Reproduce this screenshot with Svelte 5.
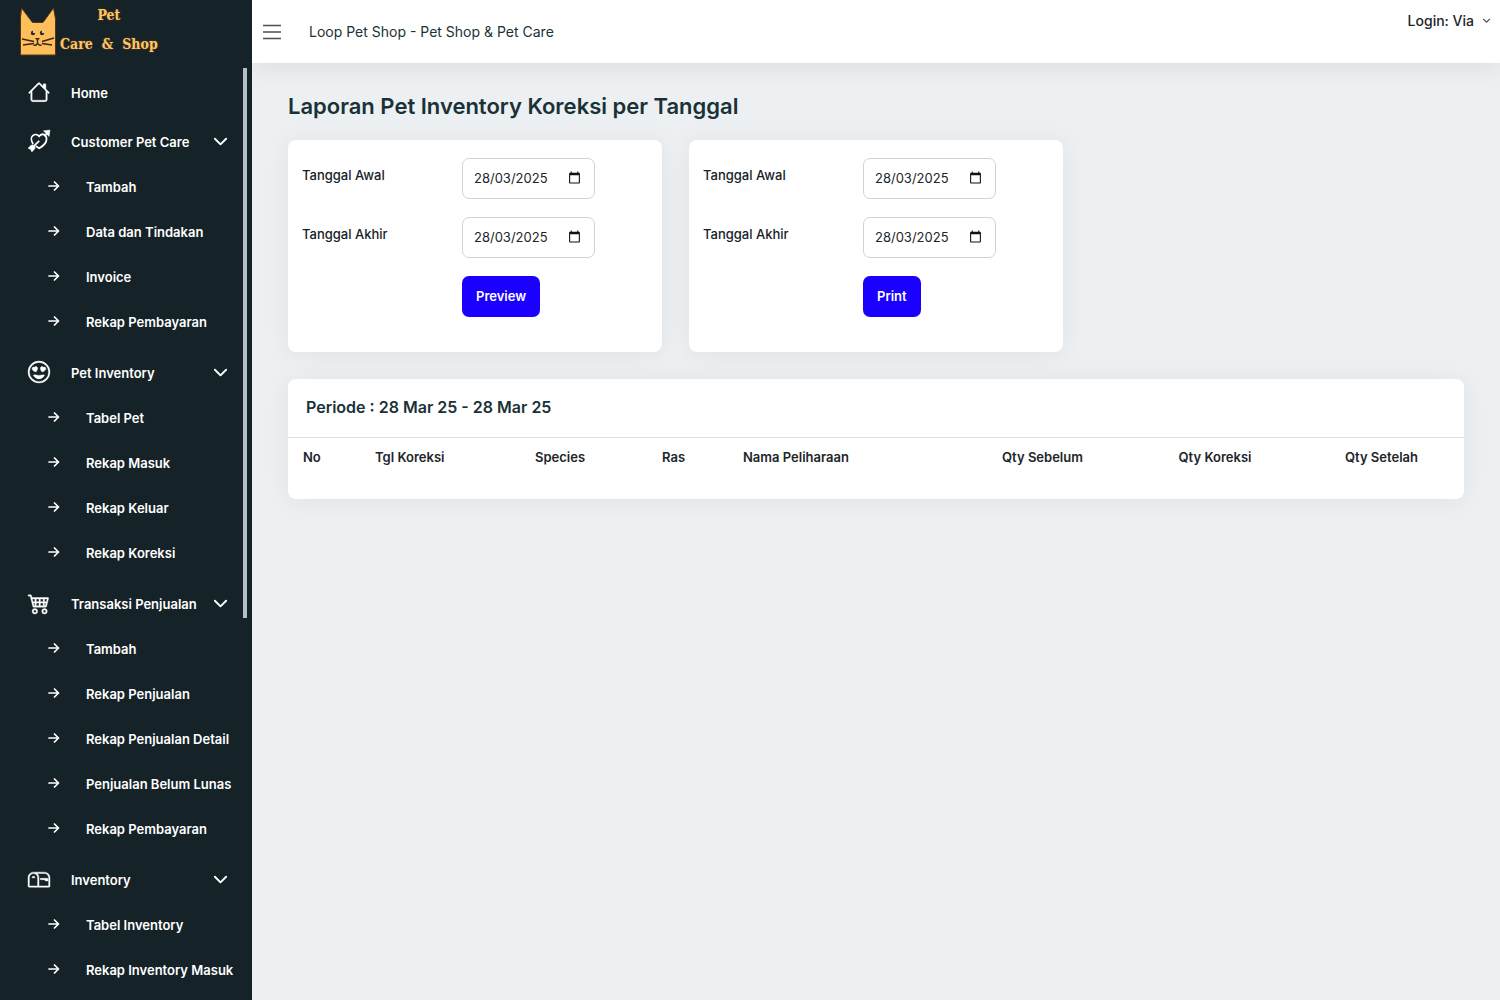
<script lang="ts">
	interface MenuGroup {
		label: string;
		icon: 'home' | 'heart' | 'smile' | 'cart' | 'mailbox';
		items: string[];
	}

	const menu: MenuGroup[] = [
		{ label: 'Home', icon: 'home', items: [] },
		{
			label: 'Customer Pet Care',
			icon: 'heart',
			items: ['Tambah', 'Data dan Tindakan', 'Invoice', 'Rekap Pembayaran'],
		},
		{
			label: 'Pet Inventory',
			icon: 'smile',
			items: ['Tabel Pet', 'Rekap Masuk', 'Rekap Keluar', 'Rekap Koreksi'],
		},
		{
			label: 'Transaksi Penjualan',
			icon: 'cart',
			items: [
				'Tambah',
				'Rekap Penjualan',
				'Rekap Penjualan Detail',
				'Penjualan Belum Lunas',
				'Rekap Pembayaran',
			],
		},
		{
			label: 'Inventory',
			icon: 'mailbox',
			items: ['Tabel Inventory', 'Rekap Inventory Masuk'],
		},
	];

	const forms = $state([
		{ id: 'preview', action: 'Preview', awal: '28/03/2025', akhir: '28/03/2025' },
		{ id: 'print', action: 'Print', awal: '28/03/2025', akhir: '28/03/2025' },
	]);

	// widths are relative, the table spreads them over its full width
	const columns = [
		{ label: 'No', width: 72 },
		{ label: 'Tgl Koreksi', width: 160 },
		{ label: 'Species', width: 127 },
		{ label: 'Ras', width: 81 },
		{ label: 'Nama Peliharaan', width: 226 },
		{ label: 'Qty Sebelum', width: 177, center: true },
		{ label: 'Qty Koreksi', width: 168, center: true },
		{ label: 'Qty Setelah', width: 165, center: true },
	];

	let closed = $state<string[]>([]);

	function toggleGroup(label: string) {
		closed = closed.includes(label) ? closed.filter((l) => l !== label) : [...closed, label];
	}
</script>

{#snippet menuIcon(name: string)}
	<svg class="menu-icon" viewBox="0 0 16 16" aria-hidden="true">
		{#if name === 'home'}
			<path
				d="M8.707 1.5a1 1 0 0 0-1.414 0L.646 8.146a.5.5 0 0 0 .708.708L2 8.207V13.5A1.5 1.5 0 0 0 3.5 15h9a1.5 1.5 0 0 0 1.5-1.5V8.207l.646.647a.5.5 0 0 0 .708-.708L13 5.793V2.5a.5.5 0 0 0-.5-.5h-1a.5.5 0 0 0-.5.5v1.293zM13 7.207V13.5a.5.5 0 0 1-.5.5h-9a.5.5 0 0 1-.5-.5V7.207l5-5z"
			/>
		{:else if name === 'heart'}
			<path
				class="line"
				d="M3.5 9.800C2 7.500 2.200 5 3.700 3.900c1.500-1.100 3.400-.6 4.400.7 1-1.400 2.700-1.800 4-1 1.800 1.200 1.900 4 .2 6.300-1 1.300-2.400 2.400-4.100 3.400-.8-.5-1.500-.9-2.100-1.400M7.800 8.200 3.500 12.500"
			/>
			<path d="M11.200.6 16 0l-.6 4.800-1.600-1.500-1.400 1.400-.8-.8L13 2.500z" />
			<path d="M3.600 10.800 5.300 12.500 4.900 13.800 2.800 16l-.9-1.900L0 13.200l2.200-2.100z" />
		{:else if name === 'smile'}
			<path d="M8 15A7 7 0 1 1 8 1a7 7 0 0 1 0 14m0 1A8 8 0 1 0 8 0a8 8 0 0 0 0 16" />
			<path
				d="M11.315 10.014a.5.5 0 0 1 .548.736A4.500 4.500 0 0 1 7.965 13a4.500 4.500 0 0 1-3.898-2.250.5.5 0 0 1 .548-.736h.005l.017.005.067.015.252.055c.215.046.515.108.857.169.693.124 1.522.242 2.152.242s1.460-.118 2.152-.242a27 27 0 0 0 1.109-.224l.067-.015.017-.004.005-.002zM4.756 4.566c.763-1.424 4.020-.12.952 3.434-4.496-1.596-2.350-4.298-.952-3.434m6.488 0c1.398-.864 3.544 1.838-.952 3.434-3.067-3.554.19-4.858.952-3.434"
			/>
		{:else if name === 'cart'}
			<path
				d="M0 2.500A.5.5 0 0 1 .5 2H2a.5.5 0 0 1 .485.379L2.890 4H14.500a.5.5 0 0 1 .485.621l-1.500 6A.5.5 0 0 1 13 11H4a.5.5 0 0 1-.485-.379L1.610 3H.5a.5.5 0 0 1-.5-.5M3.140 5l.5 2H5V5zM6 5v2h2V5zm3 0v2h2V5zm3 0v2h1.360l.5-2zm1.110 3H12v2h.610zM11 8H9v2h2zM8 8H6v2h2zM5 8H3.890l.5 2H5zm0 5a1 1 0 1 0 0 2 1 1 0 0 0 0-2m-2 1a2 2 0 1 1 4 0 2 2 0 0 1-4 0m9-1a1 1 0 1 0 0 2 1 1 0 0 0 0-2m-2 1a2 2 0 1 1 4 0 2 2 0 0 1-4 0"
			/>
		{:else}
			<path
				d="M4 4a3 3 0 0 0-3 3v6h6V7a3 3 0 0 0-3-3m0-1h8a4 4 0 0 1 4 4v6a1 1 0 0 1-1 1H1a1 1 0 0 1-1-1V7a4 4 0 0 1 4-4m2.646 1A4 4 0 0 1 8 7v6h7V7a3 3 0 0 0-3-3z"
			/>
			<path
				d="M11.793 8.500H9v-1h5a.5.5 0 0 1 .5.5v1a.5.5 0 0 1-.5.5h-1a.5.5 0 0 1-.354-.146zM5 7c0 .552-.448 0-1 0s-1 .552-1 0a1 1 0 0 1 2 0"
			/>
		{/if}
	</svg>
{/snippet}

{#snippet dateField(id: string, label: string, value: string, onChange: (v: string) => void)}
	<div class="field">
		<label for={id}>{label}</label>
		<div class="date-box">
			<input
				{id}
				type="text"
				inputmode="numeric"
				{value}
				oninput={(event) => onChange(event.currentTarget.value)}
			/>
			<svg class="calendar" viewBox="0 0 24 24" aria-hidden="true">
				<path
					d="M20 3h-1V1h-2v2H7V1H5v2H4c-1.100 0-2 .9-2 2v16c0 1.100.9 2 2 2h16c1.100 0 2-.9 2-2V5c0-1.100-.9-2-2-2zm0 18H4V8h16v13z"
				/>
			</svg>
		</div>
	</div>
{/snippet}

<div class="layout">
	<aside class="sidebar">
		<a class="brand" href="#home" aria-label="Pet Care & Shop">
			<svg class="cat" viewBox="0 0 38 50" aria-hidden="true">
				<path
					d="M1.500 49V12L2.500 2l11 14.500h10.500L34.500 2l2 11v36z"
					fill="#fdbe5c"
					stroke="#5a3410"
					stroke-width="1"
				/>
				<circle cx="14" cy="27" r="2.200" fill="#3a2616" />
				<circle cx="23" cy="27" r="2.200" fill="#3a2616" />
				<circle cx="15" cy="26" r="1" fill="#fff" />
				<circle cx="24" cy="26" r="1" fill="#fff" />
				<path d="M16 32h5l-2.500 3z" fill="#3a2616" />
				<path
					d="M18.500 34v3m-4 2q3 1 4-2 1 3 4 2M15 35.500 3 33m12 4.500L4 39m19-3.500L35 32m-12 5.500 10 1.500"
					fill="none"
					stroke="#3a2616"
					stroke-width="1.400"
				/>
			</svg>
			<span class="brand-text">
				<span>Pet</span>
				<span class="brand-line"><span>Care</span><span>&amp;</span><span>Shop</span></span>
			</span>
		</a>

		<div class="menu-wrap">
			<nav class="menu">
				{#each menu as group (group.label)}
					{#if group.items.length === 0}
						<a class="menu-head" href="#home">
							{@render menuIcon(group.icon)}
							<span>{group.label}</span>
						</a>
					{:else}
						<div class="menu-group">
							<button
								type="button"
								class="menu-head"
								aria-expanded={!closed.includes(group.label)}
								onclick={() => toggleGroup(group.label)}
							>
								{@render menuIcon(group.icon)}
								<span>{group.label}</span>
								<svg class="chevron" viewBox="0 0 16 16" aria-hidden="true">
									<path d="m2 4 6 6 6-6" />
								</svg>
							</button>
							{#if !closed.includes(group.label)}
								<ul class="submenu">
									{#each group.items as item (item)}
										<li>
											<a href="#menu">
												<svg class="arrow" viewBox="0 0 12 12" aria-hidden="true">
													<path d="M1 5h9.500M6.500 1l4 4-4 4" />
												</svg>
												<span>{item}</span>
											</a>
										</li>
									{/each}
								</ul>
							{/if}
						</div>
					{/if}
				{/each}
			</nav>
			<div class="scroll-thumb"></div>
		</div>
	</aside>

	<div class="page">
		<header class="topbar">
			<button type="button" class="burger" aria-label="Menu">
				<svg viewBox="0 0 18 16" aria-hidden="true">
					<path d="M0 1.500h18M0 8h18M0 14.500h18" />
				</svg>
			</button>
			<span class="shop-name">Loop Pet Shop - Pet Shop &amp; Pet Care</span>
			<button type="button" class="login">
				Login: Via
				<svg viewBox="0 0 16 16" aria-hidden="true"><path d="m2 5 6 6 6-6" /></svg>
			</button>
		</header>

		<main class="content">
			<h1>Laporan Pet Inventory Koreksi per Tanggal</h1>

			<div class="form-grid">
				{#each forms as form (form.id)}
					<form class="card filter" onsubmit={(event) => event.preventDefault()}>
						{@render dateField(`${form.id}-awal`, 'Tanggal Awal', form.awal, (v) => (form.awal = v))}
						{@render dateField(
							`${form.id}-akhir`,
							'Tanggal Akhir',
							form.akhir,
							(v) => (form.akhir = v),
						)}
						<div class="field">
							<span></span>
							<button type="submit" class="submit">{form.action}</button>
						</div>
					</form>
				{/each}
			</div>

			<section class="card report">
				<h2>Periode : 28 Mar 25 - 28 Mar 25</h2>
				<table>
					<colgroup>
						{#each columns as column (column.label)}
							<col style="width: {column.width}px" />
						{/each}
					</colgroup>
					<thead>
						<tr>
							{#each columns as column (column.label)}
								<th class:center={column.center}>{column.label}</th>
							{/each}
						</tr>
					</thead>
				</table>
			</section>
		</main>
	</div>
</div>

<style>
	:global(body) {
		margin: 0;
		background: #ecf0f3;
		font-family: Inter, 'Liberation Sans', sans-serif;
	}

	.layout {
		display: flex;
		min-height: 100vh;
		color: #1a3236;
		font-size: 14px;
	}

	.layout *,
	.layout {
		box-sizing: border-box;
	}

	button,
	input {
		font-family: inherit;
	}

	.sidebar {
		position: sticky;
		top: 0;
		display: flex;
		flex-direction: column;
		flex: none;
		width: 252px;
		height: 100vh;
		background: #152228;
		color: #fff;
	}

	.brand {
		display: flex;
		flex: none;
		gap: 3px;
		height: 68px;
		padding-left: 19px;
		color: #fcc466;
		text-decoration: none;
	}

	.cat {
		width: 38px;
		height: 50px;
		margin-top: 6px;
	}

	.brand-text {
		display: flex;
		flex-direction: column;
		align-items: center;
		padding-top: 1px;
		font-family: 'DejaVu Serif Condensed', 'DejaVu Serif', serif;
		font-size: 14px;
		font-weight: 700;
		line-height: 29px;
		text-shadow: 0 0 2px #7a4a14;
	}

	.brand-line {
		display: flex;
		gap: 9px;
	}

	.menu-wrap {
		position: relative;
		flex: 1;
		min-height: 0;
	}

	.menu {
		display: flex;
		flex-direction: column;
		gap: 3px;
		height: 100%;
		padding-top: 2px;
		overflow: hidden;
	}

	.menu-group {
		flex: none;
	}

	.scroll-thumb {
		position: absolute;
		top: 0;
		right: 5px;
		width: 4px;
		height: 59%;
		background: #b3c0c5;
	}

	.menu-head {
		display: flex;
		flex: none;
		align-items: center;
		width: 100%;
		height: 46px;
		padding: 0 24px 0 28px;
		border: none;
		background: transparent;
		color: inherit;
		font-size: 13px;
		font-weight: 600;
		text-align: left;
		text-decoration: none;
		cursor: pointer;
	}

	.menu-icon {
		width: 22px;
		height: 22px;
		margin: 0 21px 2px 0;
		fill: currentColor;
		stroke: currentColor;
		stroke-width: 0.3;
		overflow: visible;
	}

	.menu-icon .line {
		fill: none;
		stroke-width: 1.3;
		stroke-linecap: round;
	}

	.chevron {
		width: 15px;
		height: 15px;
		margin-left: auto;
	}

	.chevron path,
	.arrow path {
		fill: none;
		stroke: currentColor;
		stroke-width: 2;
		stroke-linecap: round;
		stroke-linejoin: round;
	}

	.submenu {
		margin: 0;
		padding: 0 0 2px;
		list-style: none;
	}

	.submenu a {
		display: flex;
		align-items: center;
		gap: 26px;
		height: 45px;
		padding: 0 0 1px 48px;
		color: inherit;
		font-size: 13px;
		font-weight: 600;
		white-space: nowrap;
		text-decoration: none;
	}

	.arrow {
		width: 12px;
		height: 12px;
	}

	.arrow path {
		stroke-width: 1.7;
	}

	.page {
		flex: 1;
		min-width: 0;
	}

	.topbar {
		display: flex;
		align-items: center;
		height: 63px;
		padding: 0 9px 0 11px;
		background: #fff;
		box-shadow: 0 4px 24px rgba(0, 0, 0, 0.08);
	}

	.burger {
		display: flex;
		padding: 0;
		border: none;
		background: transparent;
		cursor: pointer;
	}

	.burger svg {
		width: 18px;
		height: 16px;
		fill: none;
		stroke: #4a4f52;
		stroke-width: 1.4;
	}

	.shop-name {
		margin-left: 28px;
		font-size: 14px;
	}

	.login {
		display: flex;
		align-items: center;
		align-self: flex-start;
		gap: 8px;
		margin-left: auto;
		padding: 12px 0;
		border: none;
		background: transparent;
		color: #212529;
		font-size: 14px;
		font-weight: 500;
		cursor: pointer;
	}

	.login svg {
		width: 9px;
		height: 9px;
		fill: none;
		stroke: #4a4f52;
		stroke-width: 2;
	}

	.content {
		padding: 29px 36px;
	}

	h1 {
		margin: 0 0 20px;
		font-size: 22px;
		font-weight: 600;
		line-height: 28px;
	}

	.card {
		border-radius: 8px;
		background: #fff;
		box-shadow: 0 2px 24px rgba(0, 0, 0, 0.06);
	}

	.form-grid {
		display: grid;
		grid-template-columns: repeat(3, 1fr);
		gap: 27px;
		margin-bottom: 27px;
	}

	.filter {
		display: flex;
		flex-direction: column;
		gap: 18px;
		padding: 18px 14px 35px;
	}

	.field {
		display: grid;
		grid-template-columns: 160px 1fr;
		justify-items: start;
	}

	.field label {
		padding-top: 8px;
		color: #152228;
		font-size: 13px;
		font-weight: 500;
		line-height: 18px;
	}

	.date-box {
		display: flex;
		align-items: center;
		width: 133px;
		height: 41px;
		padding: 0 13px 2px 11px;
		border: 1px solid #d0d4d8;
		border-radius: 7px;
	}

	.date-box input {
		flex: 1;
		width: 0;
		padding: 0;
		border: none;
		background: transparent;
		color: #212529;
		font-size: 13px;
		outline: none;
	}

	.calendar {
		width: 13px;
		height: 13px;
		fill: #111;
	}

	.submit {
		height: 41px;
		padding: 0 14px 2px;
		border: none;
		border-radius: 7px;
		background: #1b00ff;
		color: #fff;
		font-size: 13px;
		font-weight: 600;
		cursor: pointer;
	}

	.report {
		padding-bottom: 21px;
	}

	h2 {
		margin: 0;
		padding: 17px 18px 19px;
		border-bottom: 1px solid #dee2e6;
		font-size: 16px;
		font-weight: 600;
		line-height: 22px;
	}

	table {
		width: 100%;
		table-layout: fixed;
		border-collapse: collapse;
		color: #212529;
		font-size: 13px;
	}

	th {
		padding: 9px 15px 11px;
		font-weight: 600;
		line-height: 20px;
		text-align: left;
		white-space: nowrap;
	}

	th.center {
		text-align: center;
	}
</style>
